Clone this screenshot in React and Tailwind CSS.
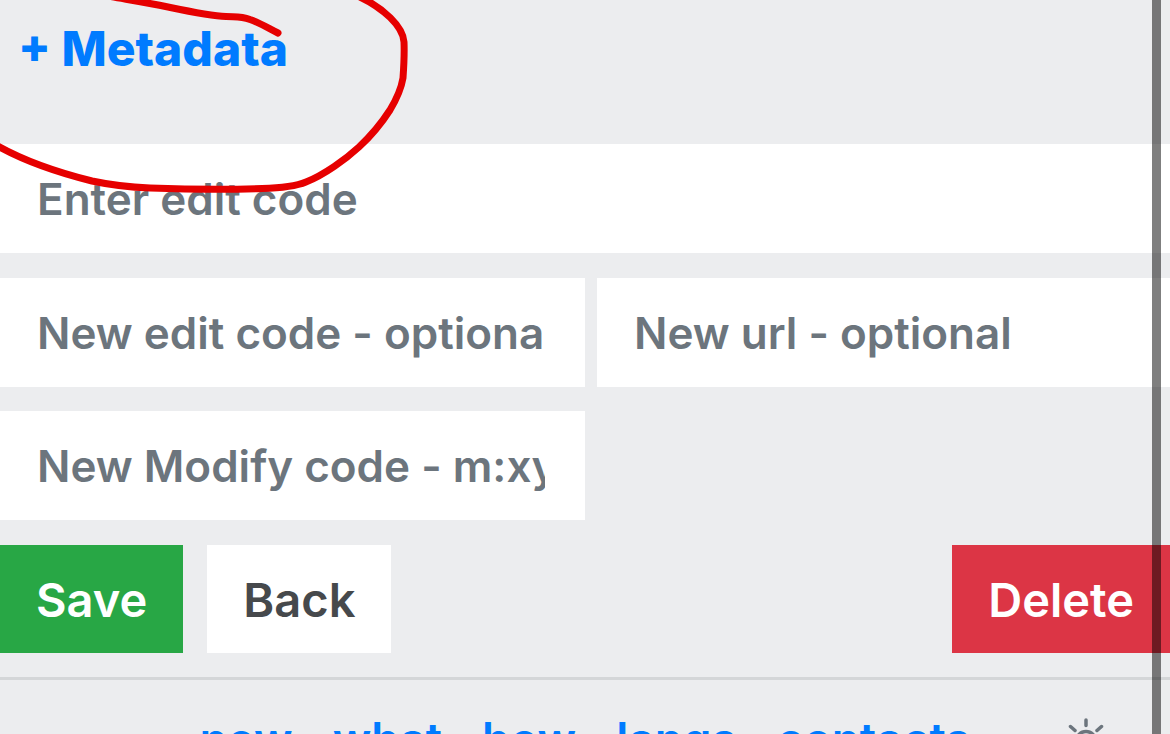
import React from "react";

const fieldClass =
  "block h-[109px] w-full rounded-none bg-white pr-10 pl-[37px] text-[44px] font-semibold text-[#495057] outline-none placeholder:text-[#6c757d] placeholder:opacity-100";

function Field({ id, label }) {
  return (
    <div className="min-w-0">
      <label htmlFor={id} className="sr-only">
        {label}
      </label>
      <input id={id} type="text" placeholder={label} className={fieldClass} />
    </div>
  );
}

function SunIcon() {
  return (
    <svg viewBox="0 0 48 48" className="h-12 w-12" fill="none" stroke="#6c757d" strokeWidth="3.500" strokeLinecap="round">
      <circle cx="24" cy="24" r="9.500" />
      <path d="M24 3v5.500M24 39.500v5.500M3 24h5.500M39.500 24h5.500M8.500 9.500l4.500 4M39.500 9.500l-4.500 4M13 34.500l-4.500 4.500M35 34.500l4.500 4.500" />
    </svg>
  );
}

function PenMarks() {
  return (
    <svg
      className="pointer-events-none absolute top-0 left-0 z-10 h-[200px] w-[420px]"
      viewBox="0 0 420 200"
      fill="none"
      stroke="#e60000"
      strokeWidth="7"
      strokeLinecap="round"
      strokeLinejoin="round"
      aria-hidden="true"
    >
      <path d="M108 -4C124 -1 144 2 168 7C192 12 211 16 226 16.500C237 17 241 16 250 19.500C260 23 268 28 278 33" />
      <path d="M360 -3C383 8 403 26 404 42C404.500 54 404 64 403 78C401 90 396 100 390 110C381 124 373 134 359 147C346 159 324 175 306 182C294 187 279 188 262 188.500C232 189.500 180 189 150 188C125 187 106 184 92 181C60 173 24 161 -4 145" />
    </svg>
  );
}

const links = ["new", "what", "how", "langs", "contacts"];

export default function App() {
  return (
    <div className="relative h-screen overflow-hidden bg-[#ecedef] font-['Inter','Liberation_Sans',sans-serif]">
      <main>
        <div className="h-[144px] px-[18px] pt-[19px]">
          <a href="#metadata" className="text-[48px] leading-[60px] font-extrabold text-[#007bff]">
            + Metadata
          </a>
        </div>
        <form onSubmit={(e) => e.preventDefault()}>
          <Field id="edit-code" label="Enter edit code" />
          <div className="-mr-3 mt-[25px] grid grid-cols-2 gap-x-3 gap-y-6">
            <Field id="new-edit-code" label="New edit code - optional" />
            <Field id="new-url" label="New url - optional" />
            <Field id="modify-code" label="New Modify code - m:xyz" />
          </div>
          <div className="mt-[25px] flex gap-6 text-[47px] font-semibold">
            <button type="submit" className="h-[108px] bg-[#28a745] px-9 pt-0.5 text-white">
              Save
            </button>
            <button type="button" className="h-[108px] bg-white px-9 pt-0.5 text-[#46494c]">
              Back
            </button>
            <button type="button" className="ml-auto h-[108px] bg-[#dc3545] px-9 pt-0.5 text-white">
              Delete
            </button>
          </div>
        </form>
      </main>
      <hr className="mt-6 border-t-[3px] border-[#d4d6d8]" />
      <footer className="grid grid-cols-[1fr_auto_1fr] items-start pt-[29px]">
        <nav className="col-start-2 flex gap-10 text-[46px] leading-[60px] font-semibold text-[#007bff]">
          {links.map((l) => (
            <a key={l} href={"#" + l}>
              {l}
            </a>
          ))}
        </nav>
        <button type="button" aria-label="Toggle theme" className="mt-2 mr-[60px] justify-self-end">
          <SunIcon />
        </button>
      </footer>
      <PenMarks />
      <div className="pointer-events-none absolute inset-y-0 right-[9px] z-20 w-[9px] bg-black/50" />
    </div>
  );
}
